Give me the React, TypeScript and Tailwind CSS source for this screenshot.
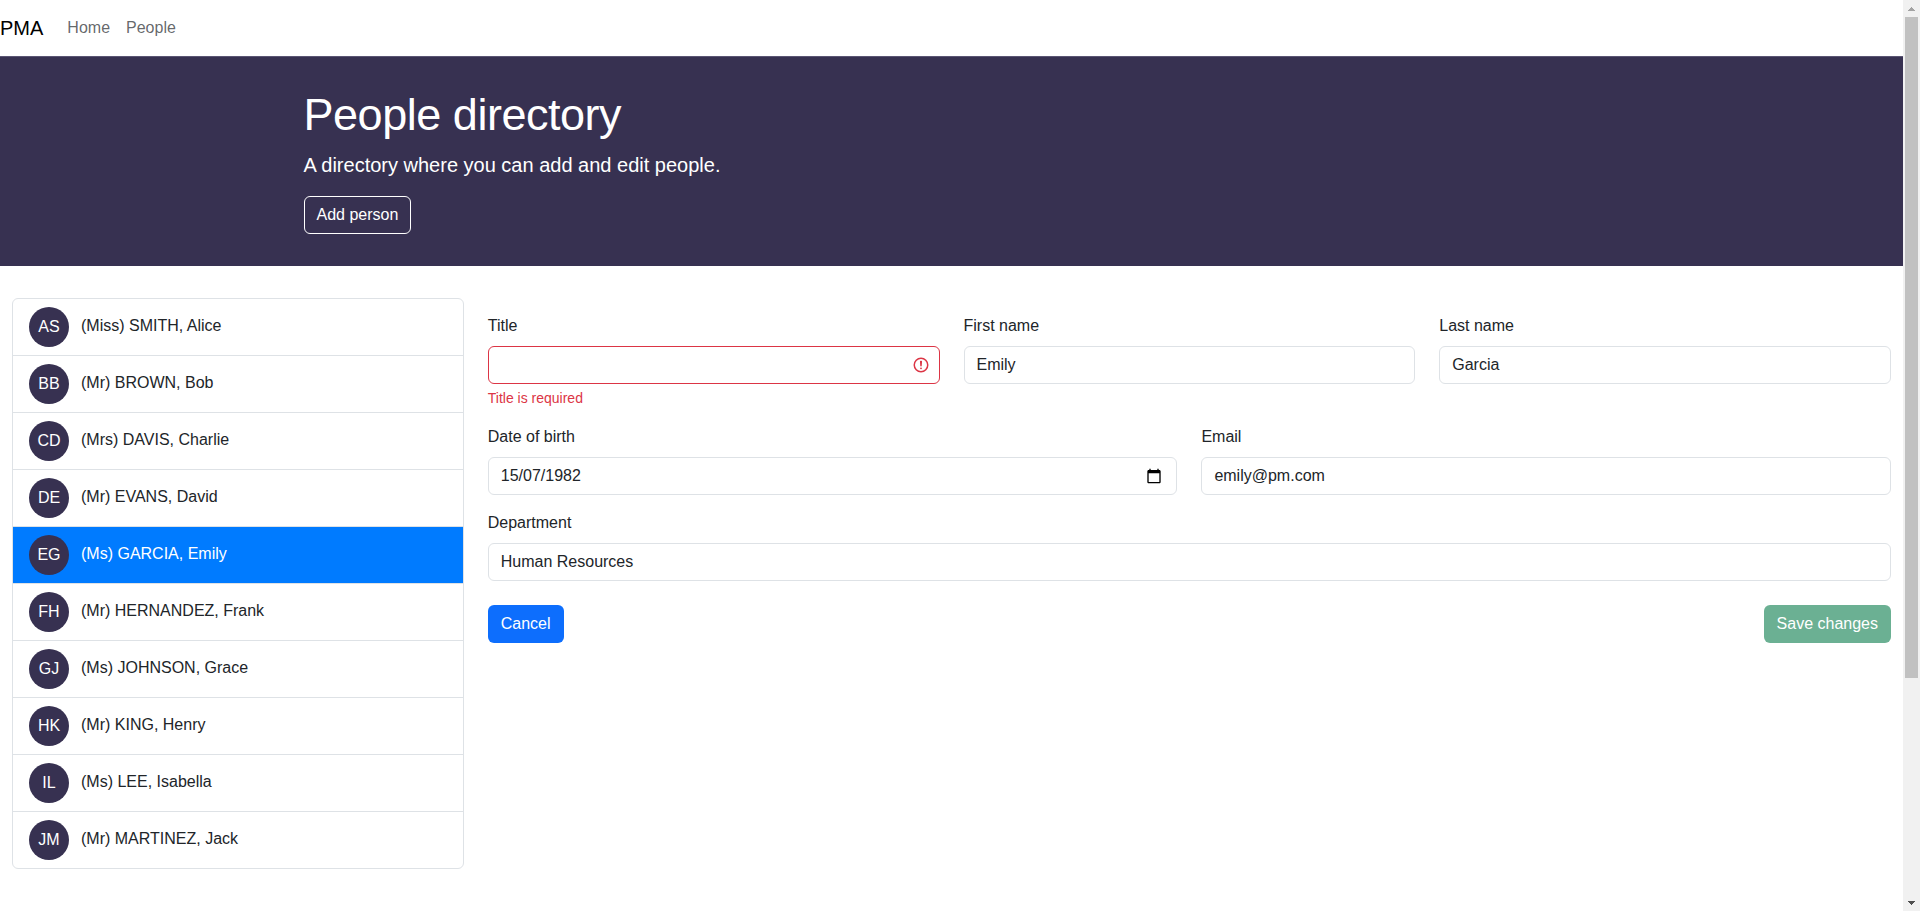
import React from 'react';

type Person = { title: string; first: string; last: string; initials: string };

const people: Person[] = [
  { title: 'Miss', first: 'Alice', last: 'SMITH', initials: 'AS' },
  { title: 'Mr', first: 'Bob', last: 'BROWN', initials: 'BB' },
  { title: 'Mrs', first: 'Charlie', last: 'DAVIS', initials: 'CD' },
  { title: 'Mr', first: 'David', last: 'EVANS', initials: 'DE' },
  { title: 'Ms', first: 'Emily', last: 'GARCIA', initials: 'EG' },
  { title: 'Mr', first: 'Frank', last: 'HERNANDEZ', initials: 'FH' },
  { title: 'Ms', first: 'Grace', last: 'JOHNSON', initials: 'GJ' },
  { title: 'Mr', first: 'Henry', last: 'KING', initials: 'HK' },
  { title: 'Ms', first: 'Isabella', last: 'LEE', initials: 'IL' },
  { title: 'Mr', first: 'Jack', last: 'MARTINEZ', initials: 'JM' },
];

function Navbar() {
  return (
    <nav className="flex h-14 items-center">
      <a className="mr-4 text-xl leading-[30px] text-black">PMA</a>
      <a className="px-2 pb-px text-[#212529b3]">Home</a>
      <a className="px-2 pb-px text-[#212529b3]">People</a>
    </nav>
  );
}

function Hero() {
  return (
    <header className="h-[210px] border-t border-[#5a5573] bg-[#373151] pt-[31px] text-white">
      <div className="mx-auto w-[1296px]">
        <h1 className="mb-2 text-[45px] leading-[54px] tracking-[-0.47px]">People directory</h1>
        <p className="mb-4 text-xl leading-[30px]">A directory where you can add and edit people.</p>
        <button className="h-[38px] rounded-md border border-white px-3 pb-px">Add person</button>
      </div>
    </header>
  );
}

function PersonRow({ person, active }: { person: Person; active: boolean }) {
  return (
    <li
      className={
        active
          ? 'box-content flex h-14 items-center bg-[#007bff] text-white'
          : 'box-content flex h-14 items-center'
      }
    >
      <span className="mr-3 ml-4 flex size-10 items-center justify-center rounded-full bg-[#373151] text-white">
        {person.initials}
      </span>
      <span className="pb-0.5">
        ({person.title}) {person.last}, {person.first}
      </span>
    </li>
  );
}

type FieldProps = { label: string; value: string; error?: string; date?: boolean };

function Field({ label, value, error, date }: FieldProps) {
  return (
    <div className="flex min-w-0 flex-1 flex-col">
      <label className="mb-2">{label}</label>
      <div
        className={
          error
            ? 'flex h-[38px] items-center justify-between rounded-md border border-[#dc3545] px-3 pb-px'
            : 'flex h-[38px] items-center justify-between rounded-md border border-[#dee2e6] px-3 pb-px'
        }
      >
        <span>{value}</span>
        {error && (
          <svg className="mt-px -mr-[3px] size-[18px]" viewBox="0 0 12 12" fill="none" stroke="#dc3545">
            <circle cx="6" cy="6" r="4.5" />
            <path strokeLinejoin="round" d="M5.8 3.6h.4L6 6.5z" />
            <circle cx="6" cy="8.2" r=".6" fill="#dc3545" stroke="none" />
          </svg>
        )}
        {date && (
          <svg className="mr-0.5 size-4" viewBox="0 0 24 24" fill="#000">
            <path d="M20 3h-1V1h-2v2H7V1H5v2H4c-1.100 0-2 .9-2 2v16c0 1.100.9 2 2 2h16c1.100 0 2-.9 2-2V5c0-1.100-.9-2-2-2zm0 18H4V8h16v13z" />
          </svg>
        )}
      </div>
      {error && <p className="mt-1 text-sm leading-[21px] text-[#dc3545]">{error}</p>}
    </div>
  );
}

function PersonForm() {
  return (
    <form className="flex flex-1 flex-col gap-4 pt-4">
      <div className="flex gap-6">
        <Field label="Title" value="" error="Title is required" />
        <Field label="First name" value="Emily" />
        <Field label="Last name" value="Garcia" />
      </div>
      <div className="flex gap-6">
        <Field label="Date of birth" value="15/07/1982" date />
        <Field label="Email" value="emily@pm.com" />
      </div>
      <div className="flex">
        <Field label="Department" value="Human Resources" />
      </div>
      <div className="mt-2 flex justify-between text-white">
        <button type="button" className="h-[38px] rounded-md bg-[#0d6efd] px-[13px] pb-px">Cancel</button>
        <button type="button" className="h-[38px] rounded-md bg-[#6bb093] px-[13px] pb-px">Save changes</button>
      </div>
    </form>
  );
}

function Scrollbar() {
  return (
    <div className="flex w-[17px] flex-col items-center bg-[#f1f1f1]">
      <div className="flex h-[17px] items-center">
        <svg width="7" height="4" viewBox="0 0 7 4" fill="#a3a3a3" shapeRendering="crispEdges">
          <path d="M3 0h1v1h1v1h1v1h1v1H0V3h1V2h1V1h1z" />
        </svg>
      </div>
      <div className="h-[661px] w-[13px] bg-[#c1c1c1]" />
      <div className="mt-auto flex h-[17px] items-center">
        <svg width="7" height="4" viewBox="0 0 7 4" fill="#505050" shapeRendering="crispEdges">
          <path d="M0 0h7v1H6v1H5v1H4v1H3V3H2V2H1V1H0z" />
        </svg>
      </div>
    </div>
  );
}

export default function App() {
  return (
    <div className="flex h-[911px] overflow-hidden bg-white font-['Liberation_Sans',Arial,sans-serif] text-base text-[#212529]">
      <div className="flex-1">
        <Navbar />
        <Hero />
        <main className="flex items-start gap-6 px-3 pt-8">
          <ul className="w-[451.75px] divide-y divide-[#dee2e6] overflow-hidden rounded-md border border-[#dee2e6]">
            {people.map((person) => (
              <PersonRow key={person.initials} person={person} active={person.initials === 'EG'} />
            ))}
          </ul>
          <PersonForm />
        </main>
      </div>
      <Scrollbar />
    </div>
  );
}
